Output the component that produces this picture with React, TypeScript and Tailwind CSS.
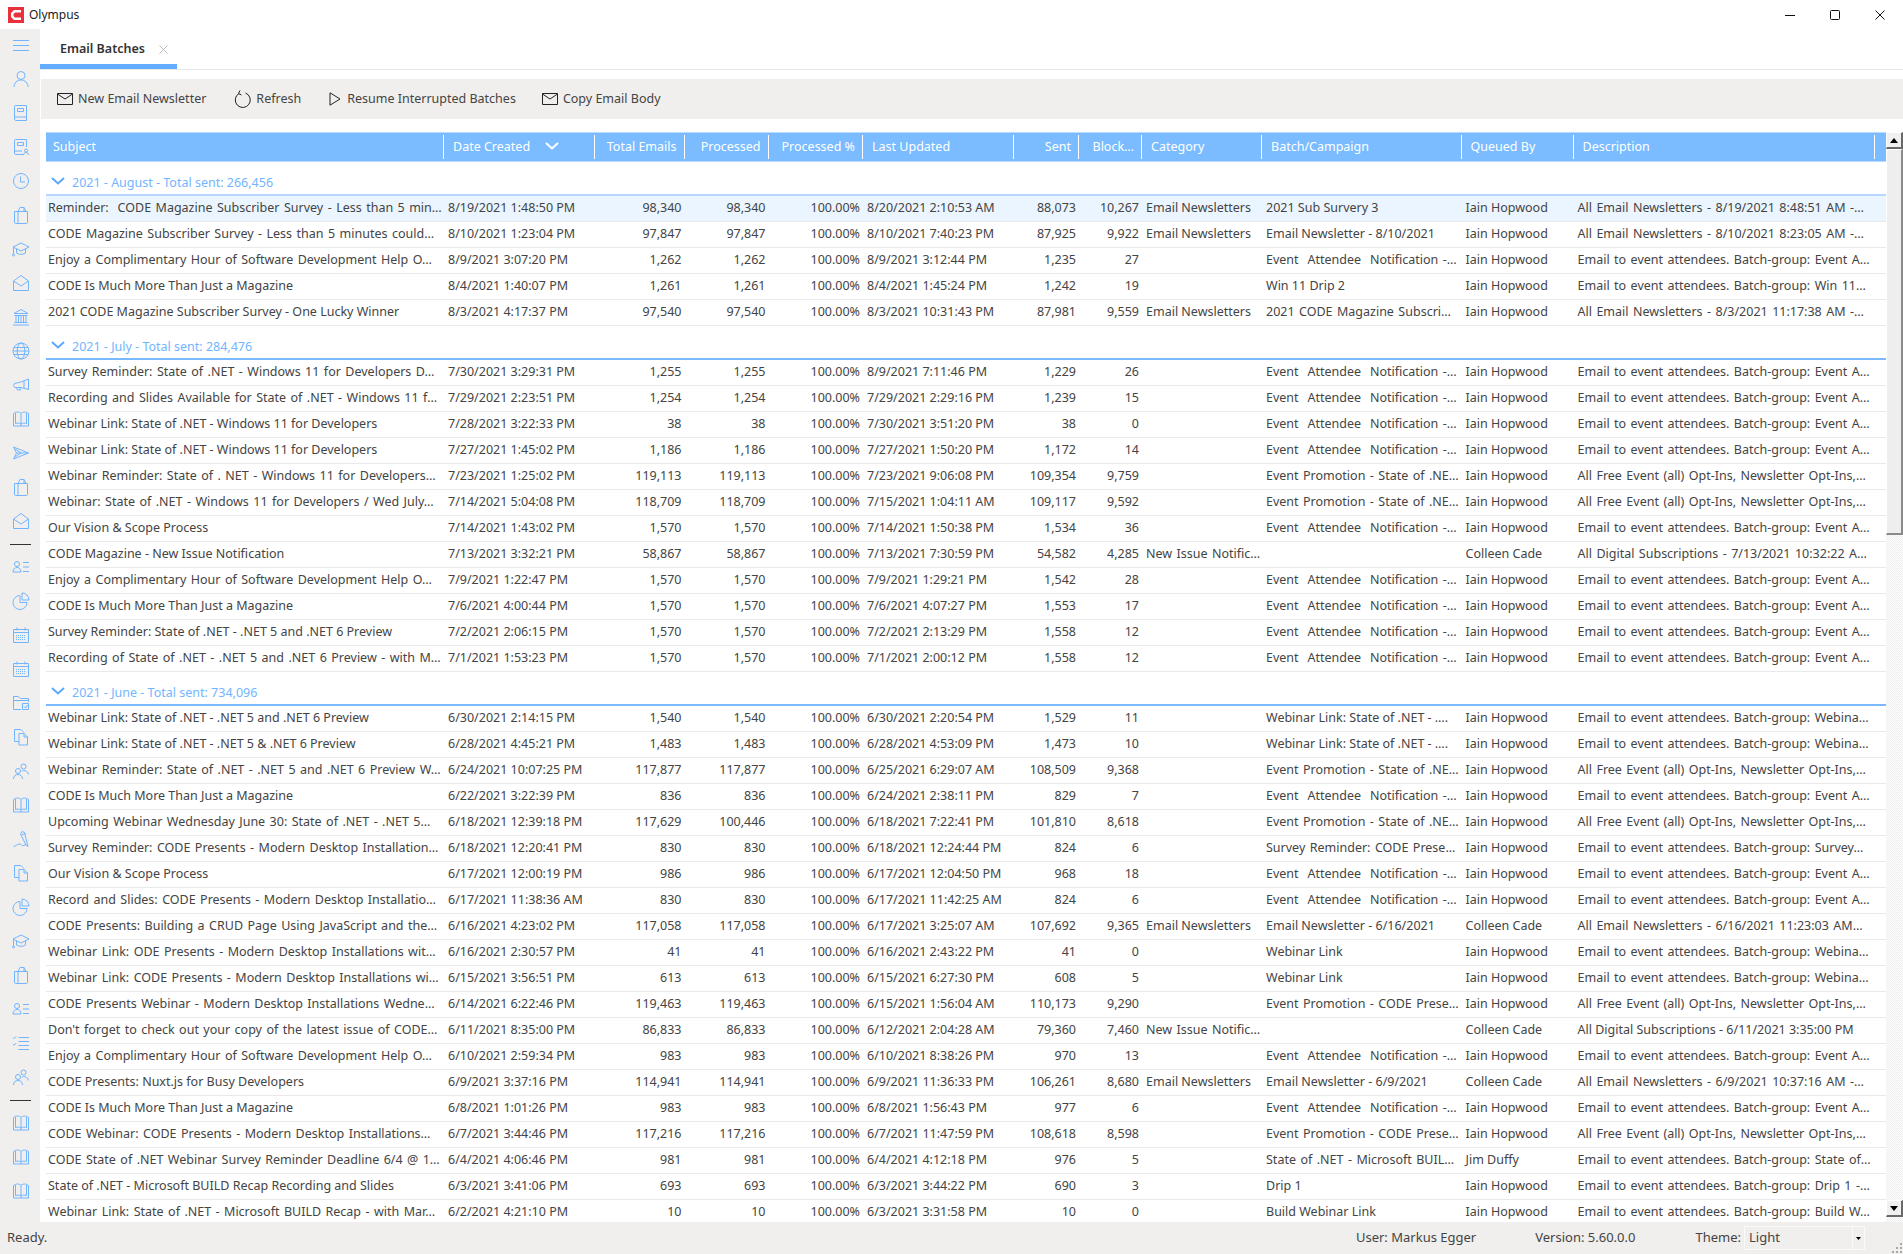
import type { ReactNode } from 'react';

const GRID =
 'grid grid-cols-[398px_151px_89.5px_84px_94.5px_150.5px_65.5px_63px_120px_199.5px_112px_301px_11px]';

const IH = 'Iain Hopwood';
const CC = 'Colleen Cade';
const EN = 'Email Newsletters';
const EA = 'Event  Attendee  Notification -…';
const PS = 'Event Promotion - State of .NE…';
const PC = 'Event Promotion - CODE Prese…';
const NI = 'New Issue Notific…';
const DA = 'Email to event attendees. Batch-group: Event A…';
const DW = 'Email to event attendees. Batch-group: Webina…';
const DF = 'All Free Event (all) Opt-Ins, Newsletter Opt-Ins,…';
const WL = 'Webinar Link: State of .NET - ….';

type Row = string[];

const august: Row[] = [
 ['Reminder:  CODE Magazine Subscriber Survey - Less than 5 min…', '8/19/2021 1:48:50 PM', '98,340', '98,340', '8/20/2021 2:10:53 AM', '88,073', '10,267', EN, '2021 Sub Survery 3', IH, 'All Email Newsletters - 8/19/2021 8:48:51 AM -…'],
 ['CODE Magazine Subscriber Survey - Less than 5 minutes could…', '8/10/2021 1:23:04 PM', '97,847', '97,847', '8/10/2021 7:40:23 PM', '87,925', '9,922', EN, 'Email Newsletter - 8/10/2021', IH, 'All Email Newsletters - 8/10/2021 8:23:05 AM -…'],
 ['Enjoy a Complimentary Hour of Software Development Help O…', '8/9/2021 3:07:20 PM', '1,262', '1,262', '8/9/2021 3:12:44 PM', '1,235', '27', '', EA, IH, DA],
 ['CODE Is Much More Than Just a Magazine', '8/4/2021 1:40:07 PM', '1,261', '1,261', '8/4/2021 1:45:24 PM', '1,242', '19', '', 'Win 11 Drip 2', IH, 'Email to event attendees. Batch-group: Win 11…'],
 ['2021 CODE Magazine Subscriber Survey - One Lucky Winner', '8/3/2021 4:17:37 PM', '97,540', '97,540', '8/3/2021 10:31:43 PM', '87,981', '9,559', EN, '2021 CODE Magazine Subscri…', IH, 'All Email Newsletters - 8/3/2021 11:17:38 AM -…'],
];

const july: Row[] = [
 ['Survey Reminder: State of .NET - Windows 11 for Developers D…', '7/30/2021 3:29:31 PM', '1,255', '1,255', '8/9/2021 7:11:46 PM', '1,229', '26', '', EA, IH, DA],
 ['Recording and Slides Available for State of .NET - Windows 11 f…', '7/29/2021 2:23:51 PM', '1,254', '1,254', '7/29/2021 2:29:16 PM', '1,239', '15', '', EA, IH, DA],
 ['Webinar Link: State of .NET - Windows 11 for Developers', '7/28/2021 3:22:33 PM', '38', '38', '7/30/2021 3:51:20 PM', '38', '0', '', EA, IH, DA],
 ['Webinar Link: State of .NET - Windows 11 for Developers', '7/27/2021 1:45:02 PM', '1,186', '1,186', '7/27/2021 1:50:20 PM', '1,172', '14', '', EA, IH, DA],
 ['Webinar Reminder: State of . NET - Windows 11 for Developers…', '7/23/2021 1:25:02 PM', '119,113', '119,113', '7/23/2021 9:06:08 PM', '109,354', '9,759', '', PS, IH, DF],
 ['Webinar: State of .NET - Windows 11 for Developers / Wed July…', '7/14/2021 5:04:08 PM', '118,709', '118,709', '7/15/2021 1:04:11 AM', '109,117', '9,592', '', PS, IH, DF],
 ['Our Vision & Scope Process', '7/14/2021 1:43:02 PM', '1,570', '1,570', '7/14/2021 1:50:38 PM', '1,534', '36', '', EA, IH, DA],
 ['CODE Magazine - New Issue Notification', '7/13/2021 3:32:21 PM', '58,867', '58,867', '7/13/2021 7:30:59 PM', '54,582', '4,285', NI, '', CC, 'All Digital Subscriptions - 7/13/2021 10:32:22 A…'],
 ['Enjoy a Complimentary Hour of Software Development Help O…', '7/9/2021 1:22:47 PM', '1,570', '1,570', '7/9/2021 1:29:21 PM', '1,542', '28', '', EA, IH, DA],
 ['CODE Is Much More Than Just a Magazine', '7/6/2021 4:00:44 PM', '1,570', '1,570', '7/6/2021 4:07:27 PM', '1,553', '17', '', EA, IH, DA],
 ['Survey Reminder: State of .NET - .NET 5 and .NET 6 Preview', '7/2/2021 2:06:15 PM', '1,570', '1,570', '7/2/2021 2:13:29 PM', '1,558', '12', '', EA, IH, DA],
 ['Recording of State of .NET - .NET 5 and .NET 6 Preview - with M…', '7/1/2021 1:53:23 PM', '1,570', '1,570', '7/1/2021 2:00:12 PM', '1,558', '12', '', EA, IH, DA],
];

const june: Row[] = [
 ['Webinar Link: State of .NET - .NET 5 and .NET 6 Preview', '6/30/2021 2:14:15 PM', '1,540', '1,540', '6/30/2021 2:20:54 PM', '1,529', '11', '', WL, IH, DW],
 ['Webinar Link: State of .NET - .NET 5 & .NET 6 Preview', '6/28/2021 4:45:21 PM', '1,483', '1,483', '6/28/2021 4:53:09 PM', '1,473', '10', '', WL, IH, DW],
 ['Webinar Reminder: State of .NET - .NET 5 and .NET 6 Preview W…', '6/24/2021 10:07:25 PM', '117,877', '117,877', '6/25/2021 6:29:07 AM', '108,509', '9,368', '', PS, IH, DF],
 ['CODE Is Much More Than Just a Magazine', '6/22/2021 3:22:39 PM', '836', '836', '6/24/2021 2:38:11 PM', '829', '7', '', EA, IH, DA],
 ['Upcoming Webinar Wednesday June 30: State of .NET - .NET 5…', '6/18/2021 12:39:18 PM', '117,629', '100,446', '6/18/2021 7:22:41 PM', '101,810', '8,618', '', PS, IH, DF],
 ['Survey Reminder: CODE Presents - Modern Desktop Installation…', '6/18/2021 12:20:41 PM', '830', '830', '6/18/2021 12:24:44 PM', '824', '6', '', 'Survey Reminder: CODE Prese…', IH, 'Email to event attendees. Batch-group: Survey…'],
 ['Our Vision & Scope Process', '6/17/2021 12:00:19 PM', '986', '986', '6/17/2021 12:04:50 PM', '968', '18', '', EA, IH, DA],
 ['Record and Slides: CODE Presents - Modern Desktop Installatio…', '6/17/2021 11:38:36 AM', '830', '830', '6/17/2021 11:42:25 AM', '824', '6', '', EA, IH, DA],
 ['CODE Presents: Building a CRUD Page Using JavaScript and the…', '6/16/2021 4:23:02 PM', '117,058', '117,058', '6/17/2021 3:25:07 AM', '107,692', '9,365', EN, 'Email Newsletter - 6/16/2021', CC, 'All Email Newsletters - 6/16/2021 11:23:03 AM…'],
 ['Webinar Link: ODE Presents - Modern Desktop Installations wit…', '6/16/2021 2:30:57 PM', '41', '41', '6/16/2021 2:43:22 PM', '41', '0', '', 'Webinar Link', IH, DW],
 ['Webinar Link: CODE Presents - Modern Desktop Installations wi…', '6/15/2021 3:56:51 PM', '613', '613', '6/15/2021 6:27:30 PM', '608', '5', '', 'Webinar Link', IH, DW],
 ['CODE Presents Webinar - Modern Desktop Installations Wedne…', '6/14/2021 6:22:46 PM', '119,463', '119,463', '6/15/2021 1:56:04 AM', '110,173', '9,290', '', PC, IH, DF],
 ["Don't forget to check out your copy of the latest issue of CODE…", '6/11/2021 8:35:00 PM', '86,833', '86,833', '6/12/2021 2:04:28 AM', '79,360', '7,460', NI, '', CC, 'All Digital Subscriptions - 6/11/2021 3:35:00 PM'],
 ['Enjoy a Complimentary Hour of Software Development Help O…', '6/10/2021 2:59:34 PM', '983', '983', '6/10/2021 8:38:26 PM', '970', '13', '', EA, IH, DA],
 ['CODE Presents: Nuxt.js for Busy Developers', '6/9/2021 3:37:16 PM', '114,941', '114,941', '6/9/2021 11:36:33 PM', '106,261', '8,680', EN, 'Email Newsletter - 6/9/2021', CC, 'All Email Newsletters - 6/9/2021 10:37:16 AM -…'],
 ['CODE Is Much More Than Just a Magazine', '6/8/2021 1:01:26 PM', '983', '983', '6/8/2021 1:56:43 PM', '977', '6', '', EA, IH, DA],
 ['CODE Webinar: CODE Presents - Modern Desktop Installations…', '6/7/2021 3:44:46 PM', '117,216', '117,216', '6/7/2021 11:47:59 PM', '108,618', '8,598', '', PC, IH, DF],
 ['CODE State of .NET Webinar Survey Reminder Deadline 6/4 @ 1…', '6/4/2021 4:06:46 PM', '981', '981', '6/4/2021 4:12:18 PM', '976', '5', '', 'State of .NET - Microsoft BUIL…', 'Jim Duffy', 'Email to event attendees. Batch-group: State of…'],
 ['State of .NET - Microsoft BUILD Recap Recording and Slides', '6/3/2021 3:41:06 PM', '693', '693', '6/3/2021 3:44:22 PM', '690', '3', '', 'Drip 1', IH, 'Email to event attendees. Batch-group: Drip 1 -…'],
 ['Webinar Link: State of .NET - Microsoft BUILD Recap - with Mar…', '6/2/2021 4:21:10 PM', '10', '10', '6/3/2021 3:31:58 PM', '10', '0', '', 'Build Webinar Link', IH, 'Email to event attendees. Batch-group: Build W…'],
];

const Ico = ({ children }: { children: ReactNode }) => (
 <svg width="18" height="18" viewBox="0 0 18 18" fill="none" stroke="#72b5ff" strokeWidth="1">
  {children}
 </svg>
);

const icons: Record<string, ReactNode> = {
 user: (
  <>
   <circle cx="9" cy="5.5" r="4" />
   <path d="M2 17c0-4 3-7 7-7s7 3 7 7" />
  </>
 ),
 book: (
  <>
   <path d="M2.5 15V2.5a1 1 0 0 1 1-1h11v15h-11a1.5 1.5 0 0 1-1-1.5zM2.5 14a1 1 0 0 1 1-1h11" />
   <path d="M5.5 4.5h6v3h-6z" />
  </>
 ),
 bookUser: (
  <>
   <path d="M11 16.5H3.5a1.5 1.5 0 0 1-1-1.5V2.5a1 1 0 0 1 1-1h11V9M2.5 14a1 1 0 0 1 1-1H10" />
   <path d="M5.5 4.5h6v3h-6z" />
   <circle cx="14" cy="12.5" r="1.5" />
   <path d="M11.5 17c0-1.5 1-2.5 2.5-2.5s2.5 1 2.5 2.5" />
  </>
 ),
 clock: (
  <>
   <circle cx="9" cy="9" r="7.5" />
   <path d="M8.5 4.5V10H13" />
  </>
 ),
 bag: (
  <>
   <path d="M2.5 5.5h13v11a1 1 0 0 1-1 1h-11a1 1 0 0 1-1-1z" />
   <path d="M6 5.5v12M6 5.5l2-4h4l2 4M12 1.5v4" />
  </>
 ),
 grad: (
  <>
   <path d="M1 7l8-4 8 4-8 4z" />
   <path d="M4.5 9v4c2.5 1.8 6.5 1.8 9 0V9M1.5 7.5V14" />
   <circle cx="1.5" cy="15" r="1" />
  </>
 ),
 mailOpen: (
  <>
   <path d="M1.5 7L9 1.5 16.5 7v9.5h-15z" />
   <path d="M1.5 7L9 12l7.5-5" />
  </>
 ),
 bank: (
  <>
   <path d="M9 1.5L2 5.5h14z" />
   <path d="M2.5 7.5h13M4 7.5v7M6.5 7.5v7M9 7.5v7M11.5 7.5v7M14 7.5v7M2.5 14.5h13M1 17h16" />
  </>
 ),
 globe: (
  <>
   <circle cx="9" cy="9" r="8" />
   <ellipse cx="9" cy="9" rx="3.8" ry="8" />
   <path d="M1 9h16M2 5.5h14M2 12.5h14" />
  </>
 ),
 horn: <path d="M16.5 3v10.5L9 11.5H2.5l-1-2 1-2 6.5-1.5zM12 4.5v8M4.5 11.5l1 2.5h3l-.5-2.5" />,
 open: (
  <>
   <path d="M1.5 3.5C4 1.5 7 1.5 9 3.5c2-2 5-2 7.5 0v12.5h-15z" />
   <path d="M9 3.5V16M3.5 3v10.5c2-.7 4-.5 5.5.5 1.5-1 3.5-1.2 5.5-.5V3" />
  </>
 ),
 send: <path d="M1.5 3l15 6-15 6 3-6-3-6zM4.5 9h12M3 5l6 4-6 4" />,
 userList: (
  <>
   <circle cx="5" cy="6" r="2.5" />
   <path d="M1 14c0-3 1.8-4.5 4-4.5S9 11 9 14zM11 4.5h6M11 9h6M11 13.5h6" />
  </>
 ),
 pie: (
  <>
   <path d="M8 3.5a7 7 0 1 0 7 7H8z" />
   <path d="M10 1a7 7 0 0 1 7 7h-7z" />
  </>
 ),
 cal: (
  <>
   <path d="M1.5 3.5h15v13h-15zM1.5 6.5h15M5 1.5v3M13 1.5v3" />
   <path d="M4 9.5h10M4 11.5h10M4 13.5h10" strokeDasharray="1 1" />
  </>
 ),
 folder: (
  <>
   <path d="M9 15.5H1.5v-13h5l2 2h8V8M1.5 6.5h15" />
   <path d="M10.5 9.5h6v6h-6zM12 12.5l1.5 1.5 2-3" />
  </>
 ),
 copy: (
  <>
   <path d="M7 13.5H2.5V1.5H9l3 3" />
   <path d="M7 5.5h5l3.5 3.5v8H7zM12 5.5V9h3.5" />
  </>
 ),
 users: (
  <>
   <circle cx="11.5" cy="4.5" r="2.5" />
   <circle cx="6" cy="9" r="2.5" />
   <path d="M1.5 17c0-3 2-4.5 4.5-4.5s4.5 1.5 4.5 4.5M10 9.5c.5-1 .8-1 1.5-1 2.5 0 4.5 1.5 5 4" />
  </>
 ),
 pen: <path d="M10 1.5l2.5 1 3 12 .5 2-2-1.5-5.5-11zM9.5 5l4-1.5M14 14.500l-2 1c-2 1-3-2-5-1.500-2 .5-3 2-5.500 2.500" />,
 checks: (
  <>
   <path d="M6.5 3.5H17M6.5 7.5H17M6.5 11.5H17M6.5 15.5H17" />
   <path d="M1 3.5l1.2 1.2 2-2.2M1 10l1.2 1.2 2-2.2" />
  </>
 ),
};

const sideTop = ['user', 'book', 'bookUser', 'clock', 'bag', 'grad', 'mailOpen', 'bank', 'globe', 'horn', 'open', 'send', 'bag', 'mailOpen'];
const sideMid = ['userList', 'pie', 'cal', 'cal', 'folder', 'copy', 'users', 'open', 'pen', 'copy', 'pie', 'grad', 'bag', 'userList', 'checks', 'users'];
const sideEnd = ['open', 'open', 'open'];

const SideItems = ({ names }: { names: string[] }) => (
 <>
  {names.map((n, i) => (
   <div key={i} className="h-[34px] shrink-0 flex items-center justify-center pl-[2px]">
    <Ico>{icons[n]}</Ico>
   </div>
  ))}
 </>
);

const Sidebar = () => (
 <aside className="w-[40px] shrink-0 bg-[#f0efed] flex flex-col">
  <div className="h-[33px] shrink-0 flex items-center justify-center pl-[2px]">
   <svg width="16" height="11" viewBox="0 0 16 11" stroke="#72b5ff" strokeWidth="1">
    <path d="M0 .5h16M0 5.5h16M0 10.5h16" />
   </svg>
  </div>
  <SideItems names={sideTop} />
  <div className="h-[12px] shrink-0 flex items-center pl-[10px]">
   <div className="w-[21px] h-px bg-[#333333]" />
  </div>
  <SideItems names={sideMid} />
  <div className="h-[12px] shrink-0 flex items-center pl-[10px]">
   <div className="w-[21px] h-px bg-[#333333]" />
  </div>
  <SideItems names={sideEnd} />
 </aside>
);

const ToolBtn = ({ icon, label, className }: { icon: ReactNode; label: string; className: string }) => (
 <div className={`flex items-center text-[#444444] ${className}`}>
  {icon}
  <span>{label}</span>
 </div>
);

const MailIcon = () => (
 <svg className="mr-[5px]" width="16" height="12" viewBox="0 0 16 12" fill="none" stroke="#222222" strokeWidth="1">
  <path d="M.5.5h15v11H.5zM.5 1l7.5 5 7.5-5" />
 </svg>
);

const Toolbar = () => (
 <div className="ml-px mt-[9px] h-[40px] shrink-0 bg-[#f0efed] flex items-center pl-[16px]">
  <ToolBtn label="New Email Newsletter" icon={<MailIcon />} className="mr-[28px]" />
  <ToolBtn
   label="Refresh"
   className="mr-[28px]"
   icon={
    <svg className="mr-[5px]" width="17" height="20" viewBox="0 0 17 20" fill="none" stroke="#222222" strokeWidth="1">
     <path d="M5 4.5a7.5 7.5 0 1 0 6.5-.5M6 1.5l-1.5 3 3 1.5" />
    </svg>
   }
  />
  <ToolBtn
   label="Resume Interrupted Batches"
   className="mr-[26px]"
   icon={
    <svg className="mr-[6px]" width="12" height="14" viewBox="0 0 12 14" fill="none" stroke="#222222" strokeWidth="1">
     <path d="M1 .8L11 7 1 13.2z" />
    </svg>
   }
  />
  <ToolBtn label="Copy Email Body" icon={<MailIcon />} className="" />
 </div>
);

const Chevron = ({ color, className }: { color: string; className: string }) => (
 <svg className={className} width="14" height="8" viewBox="0 0 14 8" fill="none" stroke={color} strokeWidth="2">
  <path d="M1 1l6 5.5L13 1" />
 </svg>
);

const HeadCell = ({ children, right }: { children?: ReactNode; right?: boolean }) => (
 <div className={`h-[24px] border-r border-white flex items-center overflow-hidden whitespace-nowrap ${right ? 'justify-end pr-[7px]' : 'pl-[9px]'}`}>
  {children}
 </div>
);

const Header = () => (
 <div className={`${GRID} h-[30px] shrink-0 items-center bg-[#7abcff] border-y border-[#b9dbff] text-white`}>
  <div className="h-[24px] border-r border-white flex items-center pl-[7px]">Subject</div>
  <HeadCell>
   Date Created
   <Chevron color="#ffffff" className="ml-[15px] mb-[2px]" />
  </HeadCell>
  <HeadCell right>Total Emails</HeadCell>
  <HeadCell right>Processed</HeadCell>
  <HeadCell right>Processed %</HeadCell>
  <HeadCell>Last Updated</HeadCell>
  <HeadCell right>Sent</HeadCell>
  <HeadCell right>Block…</HeadCell>
  <HeadCell>Category</HeadCell>
  <HeadCell>Batch/Campaign</HeadCell>
  <HeadCell>Queued By</HeadCell>
  <HeadCell>Description</HeadCell>
  <div />
 </div>
);

// the trimmed cells in the screenshot have wider gaps between words
const Left = ({ text, className = 'pl-[4px]' }: { text: string; className?: string }) => (
 <div className={`overflow-hidden whitespace-pre ${text.endsWith('…') ? '[word-spacing:1.2px]' : ''} ${className}`}>{text}</div>
);
const Num = ({ text }: { text: string }) => <div className="text-right pr-[3px] whitespace-pre">{text}</div>;

const DataRow = ({ r, selected }: { r: Row; selected?: boolean }) => (
 <div className={`${GRID} h-[26px] shrink-0 items-center border-b border-[#e9e9e9] text-[#444444] ${selected ? 'bg-[#ebf5ff]' : ''}`}>
  <Left text={r[0]} className="pl-[2px]" />
  <Left text={r[1]} />
  <Num text={r[2]} />
  <Num text={r[3]} />
  <Num text="100.00%" />
  <Left text={r[4]} />
  <Num text={r[5]} />
  <Num text={r[6]} />
  <Left text={r[7]} />
  <Left text={r[8]} />
  <Left text={r[9]} />
  <Left text={r[10]} />
  <div />
 </div>
);

const Group = ({ title, rows, first }: { title: string; rows: Row[]; first?: boolean }) => (
 <>
  <div className={`h-[34px] shrink-0 flex items-center pt-[10px] border-b-2 text-[#72b5ff] ${first ? 'border-[#b6d8ff]' : 'border-[#78b9ff]'}`}>
   <Chevron color="#5aa9ff" className="ml-[5px] mr-[7px] mb-[5px]" />
   <span>{title}</span>
  </div>
  {rows.map((r, i) => (
   <DataRow key={i} r={r} selected={first && i === 0} />
  ))}
 </>
);

const ScrollBtn = ({ up }: { up?: boolean }) => (
 <div className="h-[17px] shrink-0 bg-[#f0f0f0] border-t border-l border-white border-r-2 border-b-2 border-r-[#696969] border-b-[#696969] flex items-center justify-center">
  <svg width="8" height="5" viewBox="0 0 8 5" fill="#000000">
   <path d={up ? 'M4 0l4 5H0z' : 'M4 5L0 0h8z'} />
  </svg>
 </div>
);

const Scrollbar = () => (
 <div className="w-[17px] shrink-0 flex flex-col">
  <ScrollBtn up />
  <div className="h-[386px] shrink-0 bg-[#eeeeee] border-t border-l border-white border-r-2 border-b-2 border-r-[#8a8a8a] border-b-[#8a8a8a]" />
  <div className="flex-1 bg-[repeating-conic-gradient(#ececec_0_25%,#ffffff_0_50%)] bg-size-[2px_2px]" />
  <ScrollBtn />
  <div className="h-[5px] shrink-0 bg-[repeating-conic-gradient(#ececec_0_25%,#ffffff_0_50%)] bg-size-[2px_2px]" />
 </div>
);

const StatusBar = () => (
 <footer className="relative h-[32px] shrink-0 bg-[#f0efed] flex items-center pl-[7px] pr-[38px] text-[13px] text-[#444444]">
  <span>Ready.</span>
  <span className="ml-auto mr-[59px]">User: Markus Egger</span>
  <span className="mr-[60px]">Version: 5.60.0.0</span>
  <span className="mr-[3px]">Theme:</span>
  <div className="w-[121px] h-[24px] border border-[#fafafa] flex items-center">
   <span className="flex-1 pl-[4px]">Light</span>
   <div className="w-[12px] h-full border-l border-[#fafafa] flex items-center justify-center">
    <svg width="5" height="3" viewBox="0 0 5 3" fill="#000000">
     <path d="M0 0h5L2.5 3z" />
    </svg>
   </div>
  </div>
  <svg className="absolute right-0 bottom-0" width="12" height="12" viewBox="0 0 12 12" fill="#a8a8a8">
   <path d="M9 1h2v2H9zM5 5h2v2H5zM9 5h2v2H9zM1 9h2v2H1zM5 9h2v2H5zM9 9h2v2H9z" />
  </svg>
 </footer>
);

export default function App() {
 return (
  <div className="w-[1903px] h-[1254px] overflow-hidden bg-white flex flex-col font-['Noto_Sans',sans-serif] text-[12.5px]">
   <header className="h-[29px] shrink-0 flex items-center">
    <svg className="ml-[8px] mr-[5px]" width="16" height="16" viewBox="0 0 16 16">
     <rect width="16" height="16" fill="#e8313a" />
     <path d="M13 3H6L3 6v4l3 3h7v-2.5H7L5.5 9V7L7 5.5h6z" fill="#ffffff" />
    </svg>
    <span className="text-[12px] text-[#222222]">Olympus</span>
    <svg className="ml-auto mr-[18px]" width="100" height="12" viewBox="0 0 100 12" fill="none" stroke="#111111" strokeWidth="1">
     <path d="M0 6.5h10" />
     <rect x="45.5" y="1.5" width="9" height="9" rx="1" />
     <path d="M90.5 1.5l9 9M99.5 1.5l-9 9" />
    </svg>
   </header>
   <div className="flex-1 min-h-0 flex">
    <Sidebar />
    <main className="flex-1 min-w-0 flex flex-col">
     <div className="h-[41px] shrink-0 border-b border-[#e8e8e8] flex">
      <div className="w-[137px] h-[40px] border-b-[5px] border-[#63adff] flex items-center pl-[20px] pt-[5px] font-semibold text-[#333333]">
       Email Batches
       <svg className="ml-[14px]" width="9" height="9" viewBox="0 0 9 9" stroke="#bbbbbb" strokeWidth="1">
        <path d="M.5.5l8 8M8.5.5l-8 8" />
       </svg>
      </div>
     </div>
     <Toolbar />
     <div className="flex-1 min-h-0 flex ml-[6px] mt-[13px]">
      <div className="flex-1 min-w-0 overflow-hidden flex flex-col">
       <Header />
       <Group title="2021 - August - Total sent: 266,456" rows={august} first />
       <Group title="2021 - July - Total sent: 284,476" rows={july} />
       <Group title="2021 - June - Total sent: 734,096" rows={june} />
      </div>
      <Scrollbar />
     </div>
    </main>
   </div>
   <StatusBar />
  </div>
 );
}
